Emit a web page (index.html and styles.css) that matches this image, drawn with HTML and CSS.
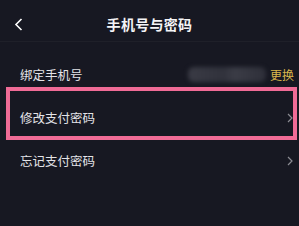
FILE: index.html
```html
<!DOCTYPE html>
<html lang="zh-CN">
<head>
    <meta charset="UTF-8">
    <meta name="viewport" content="width=device-width, initial-scale=1.0">
    <title>手机号与密码</title>
    <link rel="stylesheet" href="styles.css">
</head>
<body>

<div class="header">
    <span class="back">
        <svg width="9" height="13" viewBox="0 0 9 13"><path d="M7.5 1 L2 6.5 L7.5 12" fill="none" stroke="#ffffff" stroke-width="1.6"/></svg>
    </span>
    <h1>手机号与密码</h1>
</div>

<div class="list">
    <div class="row">
        <span class="label">绑定手机号</span>
        <span class="right">
            <span class="phone-mask"></span>
            <span class="change">更换</span>
        </span>
    </div>
    <div class="row">
        <span class="label">修改支付密码</span>
        <span class="arrow">
            <svg width="6" height="10" viewBox="0 0 6 10"><path d="M1 1 L5 5 L1 9" fill="none" stroke="#8b8b92" stroke-width="1.2"/></svg>
        </span>
    </div>
    <div class="row">
        <span class="label">忘记支付密码</span>
        <span class="arrow">
            <svg width="6" height="10" viewBox="0 0 6 10"><path d="M1 1 L5 5 L1 9" fill="none" stroke="#8b8b92" stroke-width="1.2"/></svg>
        </span>
    </div>
</div>

<!-- 标注框 -->
<div class="highlight"></div>

</body>
</html>
```

FILE: styles.css
```css
body {
    margin: 0;
    padding: 0;
    background-color: #171822;
    font-family: "Noto Sans CJK SC", "Noto Sans", sans-serif;
    color: #e8e8ea;
    width: 299px;
    height: 226px;
    overflow: hidden;
    position: relative;
}

.header {
    height: 41px;
    display: flex;
    align-items: center;
    justify-content: center;
    position: relative;
    border-bottom: 1px solid #1f2029;
}

.header h1 {
    margin: 0;
    font-size: 14px;
    font-weight: 700;
    color: #f4f4f6;
    letter-spacing: 0.3px;
    padding-top: 6px;
}

.back {
    position: absolute;
    left: 14px;
    top: 18px;
    display: flex;
}

.list {
    padding-top: 11px;
}

.row {
    height: 43px;
    display: flex;
    align-items: center;
    justify-content: space-between;
    padding: 0 5px 0 20px;
}

.label {
    font-size: 12.5px;
    color: #e4e4e8;
}

.right {
    display: flex;
    align-items: center;
}

.phone-mask {
    width: 78px;
    height: 15px;
    background: linear-gradient(90deg, #3a3b45 0%, #31323c 45%, #3b3c46 60%, #2e2f39 100%);
    border-radius: 6px;
    filter: blur(2px);
    margin-right: 4px;
}

.change {
    font-size: 12px;
    color: #d9b64c;
}

.arrow {
    display: flex;
    padding-right: 1px;
}

.highlight {
    position: absolute;
    left: 6px;
    top: 87px;
    width: 283px;
    height: 45px;
    border: 4px solid #f06b96;
}
```
